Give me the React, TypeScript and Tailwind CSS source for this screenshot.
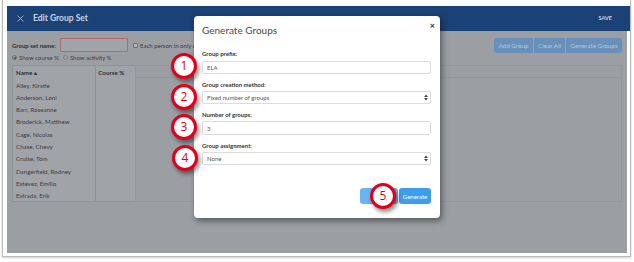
import React from "react";

const names = [
  "Alley, Kirstie",
  "Anderson, Loni",
  "Barr, Roseanne",
  "Broderick, Matthew",
  "Cage, Nicolas",
  "Chase, Chevy",
  "Cruise, Tom",
  "Dangerfield, Rodney",
  "Estevez, Emilio",
  "Estrada, Erik",
];

function Arrows() {
  return (
    <svg width="4" height="7" viewBox="0 0 4 7" className="shrink-0">
      <path d="M0 3 L2 0.5 L4 3 Z" fill="#444" />
      <path d="M0 4 L2 6.5 L4 4 Z" fill="#444" />
    </svg>
  );
}

function Callout({ n, left, top }: { n: number; left: number; top: number }) {
  return (
    <div
      className="absolute w-[26px] h-[26px] rounded-full border-[3.5px] border-[#e0001b] bg-white flex items-center justify-center text-[12px] leading-none text-[#e0001b] shadow-[2px_3px_4px_rgba(0,0,0,0.45)]"
      style={{ left, top, fontFamily: "'Open Sans', 'Liberation Sans', sans-serif" }}
    >
      {n}
    </div>
  );
}

export default function App() {
  return (
    <div className="relative w-[634px] h-[262px] bg-white overflow-hidden font-['Lato',sans-serif]">
      <div className="ml-[2px] w-[629px] h-[257px] border-l border-r border-b border-[#b9b9b9] pl-[4px] pt-[6px] pb-[3px] shadow-[0_1px_2px_rgba(0,0,0,0.2)]">
        {/* header */}
        <div className="h-[25px] w-[623px] bg-[#1b4276] flex items-center pl-[10px] pr-[18px]">
          <svg width="7" height="7" viewBox="0 0 7 7">
            <path d="M0.5 0.5 L6.5 6.5 M6.5 0.5 L0.5 6.5" stroke="#9fb1c9" strokeWidth="1" />
          </svg>
          <span className="ml-[9px] text-[8.5px] font-bold text-[#c9d4e3]">Edit Group Set</span>
          <span className="ml-auto text-[5.5px] font-bold text-[#c9d4e3]">SAVE</span>
        </div>
        {/* body */}
        <div className="h-[222px] w-[620px] bg-[#9b9ea3] pl-[5px] pr-[5px] pt-[6px] text-[#3c3f44]">
          <div className="h-[16px] flex items-center">
            <span className="text-[6px] font-bold text-[#2e3136] w-[48px]">Group set name:</span>
            <div className="w-[68px] h-[14px] border border-[#b4696b] rounded-[1px] bg-[#a0a3a8]" />
            <div className="ml-[5px] w-[5px] h-[5px] border border-[#6d7075] rounded-[1px] bg-[#b0b3b7]" />
            <span className="ml-[2px] text-[6px]">Each person in only one group</span>
            <div className="ml-auto h-[15px] flex rounded-[3px] overflow-hidden bg-[#6890bb] text-[6.3px] text-[#b5c7dc] self-end">
              <div className="w-[40px] flex items-center justify-center border-r border-[#84a5c8]">Add Group</div>
              <div className="w-[32px] flex items-center justify-center border-r border-[#84a5c8]">Clear All</div>
              <div className="w-[56px] flex items-center justify-center">Generate Groups</div>
            </div>
          </div>
          <div className="h-[9px] mt-[0px] flex items-center text-[6px]">
            <div className="w-[5px] h-[5px] rounded-full border border-[#6d7075] flex items-center justify-center">
              <div className="w-[2px] h-[2px] rounded-full bg-[#4a4d52]" />
            </div>
            <span className="ml-[2px]">Show course %</span>
            <div className="ml-[4px] w-[5px] h-[5px] rounded-full border border-[#7d8085]" />
            <span className="ml-[2px]">Show activity %</span>
          </div>
          <div className="mt-[3px] h-[137px] flex">
            <div className="w-[123px] border-l border-t border-b border-[#8f9297] bg-[#a0a3a8] text-[6.2px]">
              <div className="h-[13px] flex font-bold text-[#2e3136]">
                <div className="w-[83px] pl-[3px] flex items-center">Name ▴</div>
                <div className="w-[40px] border-l border-[#8f9297] flex items-center pl-[2px]">Course %</div>
              </div>
              {names.map((n) => (
                <div key={n} className="h-[12.3px] flex">
                  <div className="w-[83px] pl-[3px] flex items-center">{n}</div>
                  <div className="w-[40px] border-l border-[#8f9297]" />
                </div>
              ))}
            </div>
            <div className="flex-1 border-l border-t border-r border-b border-[#93969b]">
              <div className="h-[12px] border-b border-[#93969b]" />
            </div>
          </div>
        </div>
      </div>

      {/* dialog */}
      <div className="absolute left-[194px] top-[16px] w-[246px] h-[202px] bg-white rounded-[4px] shadow-[2px_3px_6px_rgba(0,0,0,0.45)] pl-[8px] pr-[9px] pt-[8px]">
        <div className="h-[12px] flex items-center">
          <span className="text-[10px] text-[#4a4a4a]">Generate Groups</span>
          <span className="ml-auto -mt-[8px] -mr-[4px] text-[9px] font-bold text-[#333]">×</span>
        </div>
        <div className="mt-[13px] h-[8px] flex items-center text-[6px] font-bold text-[#333]">Group prefix:</div>
        <div className="mt-[4px] h-[13px] border border-[#dcdcdc] rounded-[2px] flex items-center px-[4px] text-[6px] text-[#555]">ELA</div>
        <div className="mt-[6px] h-[8px] flex items-center text-[6px] font-bold text-[#333]">Group creation method:</div>
        <div className="mt-[3px] h-[13px] border border-[#dcdcdc] rounded-[2px] flex items-center pl-[4px] pr-[2px] text-[6px] text-[#555]">
          <span>Fixed number of groups</span>
          <span className="ml-auto"><Arrows /></span>
        </div>
        <div className="mt-[6px] h-[8px] flex items-center text-[6px] font-bold text-[#333]">Number of groups:</div>
        <div className="mt-[3px] h-[14px] border border-[#dcdcdc] rounded-[2px] flex items-center px-[4px] text-[6px] text-[#555]">3</div>
        <div className="mt-[6px] h-[8px] flex items-center text-[6px] font-bold text-[#333]">Group assignment:</div>
        <div className="mt-[3px] h-[13px] border border-[#dcdcdc] rounded-[2px] flex items-center pl-[4px] pr-[2px] text-[6px] text-[#555]">
          <span>None</span>
          <span className="ml-auto"><Arrows /></span>
        </div>
        <div className="mt-[23px] h-[16px] flex justify-end gap-[1px]">
          <div className="w-[38px] h-full rounded-[3px] bg-[#6db3ef]" />
          <div className="w-[32px] h-full rounded-[3px] bg-[#3f9eec] flex items-center justify-center text-[6px] text-white">Generate</div>
        </div>
      </div>

      <Callout n={1} left={171} top={53} />
      <Callout n={2} left={171} top={84} />
      <Callout n={3} left={171} top={114} />
      <Callout n={4} left={172} top={145} />
      <Callout n={5} left={370} top={183} />
    </div>
  );
}
